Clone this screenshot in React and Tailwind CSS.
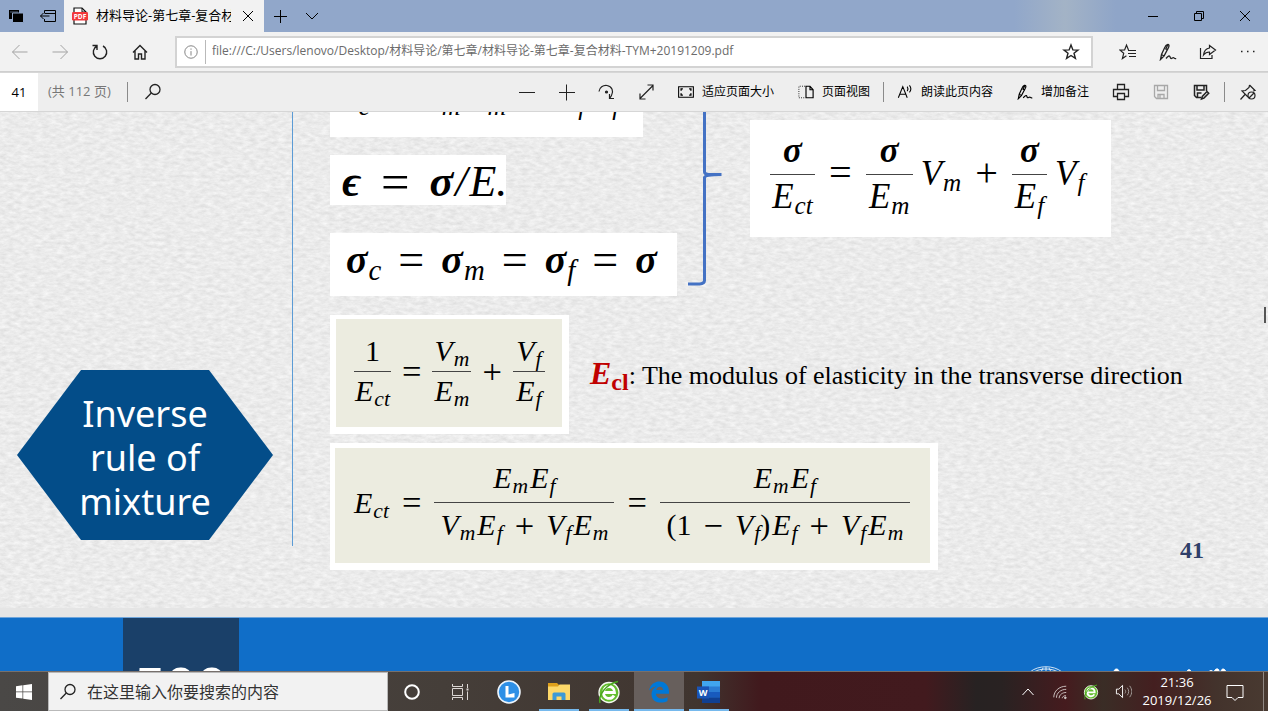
import React from "react";

const UI = "font-['Open_Sans','Noto_Sans_CJK_SC',sans-serif]";

function Icon({ size = 18, children, sw = 1, ...rest }) {
  return (
    <svg width={size} height={size} viewBox="0 0 18 18" fill="none" stroke="currentColor" strokeWidth={sw} aria-hidden="true" {...rest}>
      {children}
    </svg>
  );
}

const PenPath = () => (
  <>
    <path d="M5 13 1.500 16.500 2.500 11.500 6 4c1-2.500 4-3.600 4-1.300 0 .8-.4 1.600-.8 2.400L5 13ZM2.500 11.500 5 13M9 1.500 6.500 6.500M7 6l2 1" strokeWidth="1.300" />
    <path d="M7 15.500c2-2.500 3.500-3.200 4-1.800.4 1.200.7 2.300 2 1.500 1-.7 1.500-.9 2.200-.1.5.6 1 .8 2 .4" strokeWidth="1.300" />
  </>
);

const NavButton = ({ label, children, className = "" }) => (
  <button aria-label={label} className={`flex h-full w-10 shrink-0 items-center justify-center ${className}`}>
    {children}
  </button>
);

const ToolButton = ({ icon, text }) => (
  <button className="flex h-full shrink-0 items-center gap-2 px-3 text-xs whitespace-nowrap text-black">
    {icon}
    {text}
  </button>
);

function TitleBar() {
  return (
    <header className="flex h-8 shrink-0 bg-linear-to-r from-[#91a7ca] from-80% via-[#a3b3c6] via-84% to-[#8fa5c8] to-88% text-black">
      <div className="flex w-16 shrink-0">
        <button aria-label="已搁置的标签页" className="flex w-8 items-center justify-center">
          <svg width="16" height="16" viewBox="0 0 16 16" aria-hidden="true">
            <path d="M1 2h10v9H1z" fill="#000" />
            <path d="M4.500 5h11v9.500h-11z" fill="#000" stroke="#91a7ca" />
            <path d="M2 4h8" stroke="#91a7ca" strokeWidth=".6" />
          </svg>
        </button>
        <button aria-label="搁置标签页" className="flex w-8 items-center justify-center">
          <Icon size={18}>
            <path d="M5.500 6V3.500h11v11h-11V12M5.500 6.500h11M1.500 9h9M4.500 6 1.500 9l3 3" />
          </Icon>
        </button>
      </div>
      <div className="flex w-50 shrink-0 items-center bg-[#f2f2f2] pl-2">
        <svg width="16" height="18" viewBox="0 0 16 18" className="shrink-0" aria-hidden="true">
          <path d="M2 1h8l4 4v12H2z" fill="#fff" stroke="#111" strokeWidth="1.200" />
          <path d="M10 1v4h4" fill="none" stroke="#111" />
          <rect x="0" y="5" width="16" height="8.500" rx="1.200" fill="#f2383c" />
          <text x="8" y="11.700" fontSize="6.500" fontWeight="700" fill="#fff" textAnchor="middle" fontFamily="Open Sans">PDF</text>
        </svg>
        <span className="ml-2 w-[135px] overflow-hidden text-[13px] whitespace-nowrap">材料导论-第七章-复合材料</span>
        <button aria-label="关闭标签页" className="flex h-full grow items-center justify-center">
          <Icon size={18}><path d="m4 4 10 10M14 4 4 14" /></Icon>
        </button>
      </div>
      <button aria-label="新建标签页" className="flex w-8 items-center justify-center">
        <Icon size={18}><path d="M9.500 3v13M3 9.500h13" /></Icon>
      </button>
      <button aria-label="标签页预览" className="flex w-8 items-center justify-center">
        <Icon size={18}><path d="m3 6 6 6 6-6" /></Icon>
      </button>
      <div className="ml-auto flex">
        <button aria-label="最小化" className="flex w-[46px] items-center justify-center">
          <Icon size={18}><path d="M4 9.500h10" /></Icon>
        </button>
        <button aria-label="还原" className="flex w-[46px] items-center justify-center">
          <Icon size={18}><path d="M4.500 6.500h7v7h-7zM6.500 6.500v-2h7v7h-2" /></Icon>
        </button>
        <button aria-label="关闭" className="flex w-[46px] items-center justify-center">
          <Icon size={18}><path d="m4 4 10 10M14 4 4 14" /></Icon>
        </button>
      </div>
    </header>
  );
}

function NavBar() {
  return (
    <nav className="flex h-10 shrink-0 items-center border-b border-[#cfcfcf] bg-[#f2f2f2] text-[#222]">
      <NavButton label="后退" className="text-[#a3a3a3]">
        <Icon size={18}><path d="M1.500 9h15M8.500 2l-7 7 7 7" /></Icon>
      </NavButton>
      <NavButton label="前进" className="text-[#a3a3a3]">
        <Icon size={18}><path d="M1.500 9h15M9.500 2l7 7-7 7" /></Icon>
      </NavButton>
      <NavButton label="刷新">
        <Icon size={18} sw={1.4}><path d="M12 3a6.700 6.700 0 1 1-6 0M1.500 2.500H6V7" /></Icon>
      </NavButton>
      <NavButton label="主页">
        <Icon size={18} sw={1.4}><path d="m2 9.500 7-7 7 7M4 8v8h3.500v-5h3v5H14V8" /></Icon>
      </NavButton>
      <div className="mr-[15px] ml-[15px] flex h-8 grow items-center border-2 border-[#d3d3d3] bg-white">
        <button aria-label="网站信息" className="flex h-full w-7 items-center justify-center text-[#777]">
          <Icon size={16}><circle cx="9" cy="9" r="7" /><path d="M9 8v5M9 5v1.500" /></Icon>
        </button>
        <span className="h-6 w-px bg-[#b9b9b9]" />
        <input aria-label="地址" readOnly value="file:///C:/Users/lenovo/Desktop/材料导论/第七章/材料导论-第七章-复合材料-TYM+20191209.pdf" className="ml-1.5 h-full min-w-0 grow bg-transparent pb-1 text-xs text-[#6b6b6b] outline-none" />
        <NavButton label="收藏">
          <Icon size={18} sw={1.4}><path d="m9 2 1.900 4.900 5.100.2-4 3.200 1.400 5.100L9 12.500l-4.400 2.900L6 10.300 2 7.100l5.100-.2z" /></Icon>
        </NavButton>
      </div>
      <NavButton label="收藏夹">
        <Icon size={18} sw={1.200}><path d="M9.500 6.900 7.500 2 5.600 6.900l-4.600.2 3.700 3.200-1.300 5.200 4-2.800M9 7.500h8M9 10.500h8M10 13.500h7" /></Icon>
      </NavButton>
      <NavButton label="添加笔记"><Icon size={18}><PenPath /></Icon></NavButton>
      <NavButton label="共享">
        <Icon size={18} sw={1.200}><path d="M1.500 5v10.500H13V12M10.500 2.500l6 4.500-6 4.500V9C7.500 9 6 10 4.500 12 5 8 7 5.500 10.500 5z" /></Icon>
      </NavButton>
      <NavButton label="更多">
        <Icon size={18}><path d="M2 8.500h1.500M8 8.500h1.500M14 8.500h1.500" strokeWidth="1.500" /></Icon>
      </NavButton>
    </nav>
  );
}

function PdfToolbar() {
  return (
    <div className="flex h-10 shrink-0 items-center border-y border-[#d6d6d6] bg-[#eeeeee] text-[#222]">
      <input aria-label="页码" defaultValue="41" className="h-full w-[38px] bg-white text-center text-[13px] text-black outline-none" />
      <span className="ml-[10px] text-[13px] text-[#777]">(共 112 页)</span>
      <span className="ml-4 h-5 w-px bg-[#8a8a8a]" />
      <button aria-label="查找" className="ml-4 flex h-full items-center">
        <Icon size={18} sw={1.300}><circle cx="11" cy="6.500" r="5" /><path d="M7.300 10 1.500 16" /></Icon>
      </button>
      <div className="ml-auto flex h-full items-center">
        <NavButton label="缩小"><Icon><path d="M2 9.500h16" /></Icon></NavButton>
        <NavButton label="放大"><Icon><path d="M2 9.500h16M9.500 1.500v16" /></Icon></NavButton>
        <NavButton label="旋转"><Icon sw={1.200}><path d="M2 8.500c.5-4 4-6.500 8-6 5 .800 7 6 4.500 10L13 15M12.500 11v4.500H17" /><circle cx="9.500" cy="9" r="1" fill="currentColor" /></Icon></NavButton>
        <NavButton label="全屏"><Icon sw={1.200}><path d="m3 15.500 13-13M10.500 2h5.500v5.500M8.500 16H3v-5.500" /></Icon></NavButton>
        <ToolButton text="适应页面大小" icon={<Icon size={16}><path d="M.700 3h16.600v12H.700z" strokeWidth="1.200" /><path d="M3.500 7.500v-2h2M12.500 5.500h2v2M14.500 10.500v2h-2M5.500 12.500h-2v-2" strokeWidth="1.500" /></Icon>} />
        <ToolButton text="页面视图" icon={<Icon size={16}><path d="M8 2.500H1v13h7" strokeDasharray="1 1.500" /><path d="M9 2.500h4.500l3.500 4v9H9zM13.500 2.500v4H17" strokeWidth="1.300" /></Icon>} />
        <span className="mx-px h-5 w-px bg-[#8a8a8a]" />
        <ToolButton text="朗读此页内容" icon={<Icon size={16} sw={1.200}><path d="M1.500 15.500 6.500 3l5 12.500M3.200 11.500h6.600M11.500 3c1 1.500 1 3.500 0 5M14 1.500c2 2.500 2 5.500 0 8" /></Icon>} />
        <ToolButton text="增加备注" icon={<Icon size={16}><PenPath /></Icon>} />
        <NavButton label="打印"><Icon sw={1.300}><path d="M5.500 6.500v-5h7v5M5.500 13.500H1.500v-7h15v7h-4M5.500 10.500h7v6h-7z" /></Icon></NavButton>
        <NavButton label="保存" className="text-[#a8a8a8]"><Icon sw={1.300}><path d="M2.500 2.500h13v13h-11l-2-2zM5.500 2.500v5h7v-5M6 15.500v-4h6v4M8 12v3" /></Icon></NavButton>
        <NavButton label="另存为"><Icon sw={1.500}><path d="M9 14.500H4.500l-2-2v-10h12V8M5 2.500v4.500h7V2.500M5.500 14v-4h4" /><path d="m9.500 16 .800-2.500L15 8.500l1.700 1.700-4.800 4.900z" /></Icon></NavButton>
        <span className="mx-[3px] h-5 w-px bg-[#8a8a8a]" />
        <NavButton label="取消固定工具栏"><Icon sw={1.200}><path d="m10.500 2 5.500 5.500-2 .5M10.500 2l-.5 2.500-3.500 3-3.500.5 6 6M1.500 16.500l4.500-5" /><circle cx="12.500" cy="12.500" r="3.500" /><path d="m10 15 5-5" /></Icon></NavButton>
      </div>
    </div>
  );
}

const Sym = ({ v, s, bold }) => (
  <span className={`italic whitespace-nowrap ${bold ? "font-bold" : ""}`}>
    {v}
    {s && <sub className="ml-px text-[0.72em] font-normal">{s}</sub>}
  </span>
);
const Op = ({ children }) => <span className="text-[1.15em] leading-none">{children}</span>;

const Frac = ({ num, den, className = "" }) => (
  <span className={`flex flex-col items-center ${className}`}>
    <span className="flex w-full justify-center border-b border-[#444] pb-[5px]">{num}</span>
    <span className="flex justify-center pt-1 whitespace-nowrap">{den}</span>
  </span>
);

function Paper() {
  return (
    <svg className="absolute inset-0 size-full" aria-hidden="true">
      <filter id="grain" x="0" y="0" width="100%" height="100%" colorInterpolationFilters="sRGB">
        <feTurbulence type="fractalNoise" baseFrequency="0.14 0.3" numOctaves="4" seed="7" />
        <feColorMatrix values="0.13 0 0 0 0.856  0.13 0 0 0 0.856  0.13 0 0 0 0.856  0 0 0 0 1" />
      </filter>
      <rect width="100%" height="100%" filter="url(#grain)" />
    </svg>
  );
}

function Slide() {
  return (
    <article className="relative flex shrink-0 items-start bg-[#ebebeb] pb-[38px] font-['Liberation_Serif',serif] text-black">
      <Paper />
      <aside className="relative h-[434px] w-[293px] shrink-0 border-r border-[#5b9bd5] pt-[258px] pl-[17px]">
        <h2 className="flex h-[170px] w-64 items-center justify-center bg-[#034d89] pt-1.5 text-center font-['Noto_Sans',sans-serif] text-4xl leading-11 text-white [clip-path:polygon(25%_0,75%_0,100%_50%,75%_100%,25%_100%,0_50%)]">
          Inverse<br />rule of<br />mixture
        </h2>
      </aside>
      <div className="relative ml-[37px] flex grow flex-col">
        <section className="flex items-start">
          <div className="flex w-[347px] flex-col items-start">
            <div className="flex h-[25px] w-[313px] items-end gap-4 overflow-hidden bg-white pb-[22px] pl-3 text-[36px] leading-9">
              <Sym bold v="ϵ" s="c" /><Op>=</Op>
              <span className="flex gap-1"><Sym bold v="ϵ" s="m" /><Sym v="V" s="m" /></span>
              <Op>+</Op>
              <span className="flex gap-1"><Sym bold v="ϵ" s="f" /><Sym v="V" s="f" /></span>
            </div>
            <div className="mt-[18px] flex h-[50px] w-44 items-center gap-5 overflow-hidden bg-white pt-1 pl-3 text-[44px] leading-none">
              <Sym bold v="ϵ" /><Op>=</Op>
              <span className="flex gap-0.5"><Sym bold v="σ" /><Sym v="/" /><Sym v="E." /></span>
            </div>
            <div className="mt-7 flex h-[63px] w-full items-center gap-[17px] bg-white pb-2.5 pl-4 text-[40px] leading-none">
              <Sym bold v="σ" s="c" /><Op>=</Op><Sym bold v="σ" s="m" /><Op>=</Op><Sym bold v="σ" s="f" /><Op>=</Op><Sym bold v="σ" />
            </div>
          </div>
          <svg width="36" height="176" viewBox="0 0 36 176" className="ml-[10px] shrink-0" fill="none" stroke="#4472c4" strokeWidth="3" aria-hidden="true">
            <path d="M17.500 0v60q0 2 4 2.500h13q-17 0-17 3v103q0 3-5 3.500H1" />
          </svg>
          <div className="mt-2 ml-[27px] flex h-[117px] w-[361px] shrink-0 items-center gap-3.5 bg-white pb-2.5 pl-5 text-[35px] leading-9">
            <Frac className="w-[45px]" num={<Sym bold v="σ" />} den={<Sym v="E" s="ct" />} />
            <Op>=</Op>
            <span className="flex items-center gap-2"><Frac className="w-[47px]" num={<Sym bold v="σ" />} den={<Sym v="E" s="m" />} /><Sym v="V" s="m" /></span>
            <Op>+</Op>
            <span className="flex items-center gap-2"><Frac className="w-[35px]" num={<Sym bold v="σ" />} den={<Sym v="E" s="f" />} /><Sym v="V" s="f" /></span>
          </div>
        </section>
        <section className="mt-[19px] flex items-center">
          <div className="h-[119px] w-[239px] shrink-0 bg-white pt-1 pr-[7px] pb-[7px] pl-1.5">
            <div className="flex h-full items-center gap-[11px] bg-[#ecece0] pb-1 pl-[18px] text-[30px] leading-[30px]">
              <Frac className="w-[37px]" num="1" den={<Sym v="E" s="ct" />} />
              <Op>=</Op>
              <Frac className="w-[39px]" num={<Sym v="V" s="m" />} den={<Sym v="E" s="m" />} />
              <Op>+</Op>
              <Frac className="w-8" num={<Sym v="V" s="f" />} den={<Sym v="E" s="f" />} />
            </div>
          </div>
          <p className="ml-[21px] text-[26px] leading-9 whitespace-nowrap">
            <b className="text-[#c00000]"><i className="text-[32px]">E</i><sub className="text-[24px]">cl</sub></b>: The modulus of elasticity in the transverse direction
          </p>
        </section>
        <section className="mt-[9px] flex items-end justify-between pr-16">
          <div className="h-[127px] w-[608px] shrink-0 bg-white pt-[5px] pr-2 pb-[7px] pl-[5px]">
            <div className="flex h-full items-center gap-[13px] bg-[#ecece0] pb-1.5 pl-[19px] text-[30px] leading-[30px]">
              <Sym v="E" s="ct" />
              <Op>=</Op>
              <Frac className="w-[180px]" num={<span className="flex gap-0.5 pb-1"><Sym v="E" s="m" /><Sym v="E" s="f" /></span>} den={<span className="flex items-center gap-3 pt-px"><span className="flex gap-0.5"><Sym v="V" s="m" /><Sym v="E" s="f" /></span><Op>+</Op><span className="flex gap-0.5"><Sym v="V" s="f" /><Sym v="E" s="m" /></span></span>} />
              <Op>=</Op>
              <Frac className="w-[250px]" num={<span className="flex gap-0.5 pb-1"><Sym v="E" s="m" /><Sym v="E" s="f" /></span>} den={<span className="flex items-center gap-3 pt-px"><span>(1</span><Op>−</Op><span className="flex gap-0.5"><span><Sym v="V" s="f" />)</span><Sym v="E" s="f" /></span><Op>+</Op><span className="flex gap-0.5"><Sym v="V" s="f" /><Sym v="E" s="m" /></span></span>} />
            </div>
          </div>
          <span className="text-2xl leading-10 font-bold text-[#2f3f69]">41</span>
        </section>
      </div>
      <span className="absolute top-[195px] right-0.5 h-4 w-0.5 bg-[#555]" />
    </article>
  );
}

function NextSlide() {
  return (
    <article className="mt-[9px] flex grow items-start justify-between overflow-hidden border-t border-[#6fa5da] bg-[#106ec8] pr-[38px] pl-[123px]">
      <div className="h-24 w-29 bg-[#1a4069] pt-10 text-center font-['Open_Sans',sans-serif] text-[54px] leading-[56px] font-bold text-white">500</div>
      <svg width="200" height="54" viewBox="0 0 200 54" className="shrink-0" fill="none" stroke="#fff" aria-hidden="true">
        <path d="M0 54c8-7 24-7 32 0M4 54c6-4 18-4 24 0M11 54l2-4M21 54l-2-4M16 49v5" strokeWidth="1" opacity=".8" />
        <path d="M84 54c0-4 5-4 5 0M157 54c0-3 4-3 4 0M179 54c0-2 4-2 4 0M184 54c1-4 5-4 5-1M191 54c0-4 4-4 5 0" fill="#fff" />
      </svg>
    </article>
  );
}

const TaskButton = ({ label, open, active, children }) => (
  <button aria-label={label} className={`flex h-full w-[50px] shrink-0 flex-col items-center ${active ? "bg-[#675f5c]" : ""}`}>
    <span className="flex grow items-center pt-0.5">{children}</span>
    <span className={`h-0.5 ${active ? "w-full" : "w-10"} ${open ? "bg-[#76b9ed]" : ""}`} />
  </button>
);

function GreenE({ size }) {
  return (
    <svg width={size} height={size} viewBox="0 0 24 24" fill="none" aria-hidden="true">
      <circle cx="12" cy="12.500" r="10" fill="#64bd2f" stroke="#f4f8ef" strokeWidth="1.300" />
      <path d="M7 12.500h10.500c0-8-11-8-11 0 0 7 8 7.500 10.500 3" stroke="#fff" strokeWidth="2.800" />
      <path d="M3 23C1 15 9 4 21 1.500" stroke="#48a51f" strokeWidth="1.500" />
    </svg>
  );
}

function Taskbar() {
  return (
    <footer className="flex h-10 shrink-0 items-center border-t border-[#77706c] text-white [background-image:linear-gradient(to_right,#4a4846_0%,#453e39_35%,#40352f_55%,#41191d_60%,#421a1e_73%,#272222_77%,#292222_79%,#451b1e_84%,#3a2d26_87%,#441f20_91%,#43332c_96%,#493a31_100%)]">
      <button aria-label="开始" className="flex h-full w-12 shrink-0 items-center justify-center">
        <svg width="16" height="16" viewBox="0 0 16 16" fill="#fff" aria-hidden="true">
          <path d="M0 2.200 6.500 1.300v6.300H0zM7.200 1.200 16 0v7.600H7.200zM0 8.300h6.500v6.300L0 13.700zM7.200 8.300H16V16l-8.800-1.300z" />
        </svg>
      </button>
      <label className="flex h-full w-[340px] shrink-0 items-center border border-[#b9b9b9] bg-[#f2f2f2] pl-2.5 text-[#222]">
        <Icon size={18} sw={1.300}><circle cx="11" cy="6.500" r="5" /><path d="M7.300 10 1.500 16" /></Icon>
        <input aria-label="搜索" placeholder="在这里输入你要搜索的内容" className="ml-2.5 min-w-0 grow bg-transparent text-base outline-none placeholder:text-[#333]" />
      </label>
      <button aria-label="Cortana" className="flex h-full w-12 shrink-0 items-center justify-center">
        <svg width="18" height="18" viewBox="0 0 18 18" fill="none" stroke="#fff" strokeWidth="2" aria-hidden="true"><circle cx="9" cy="9" r="6.800" /></svg>
      </button>
      <button aria-label="任务视图" className="flex h-full w-12 shrink-0 items-center justify-center text-[#ddd8d5]">
        <Icon size={18}><path d="M1.500 1v2.500h10V1M1.500 5.500h10v7h-10zM1.500 17v-2.500h10V17M16.500 1v4M16.500 8.500v8.500" /><path d="M15.500 6.500h2" strokeWidth="2" /></Icon>
      </button>
      <TaskButton label="联想">
        <svg width="24" height="24" viewBox="0 0 24 24" aria-hidden="true"><circle cx="12" cy="12" r="11" fill="#2d8fe6" stroke="#eef5fc" strokeWidth="1.600" /><path d="M8.500 6h3v8.500l6-1.500v4.500h-9z" fill="#fff" /></svg>
      </TaskButton>
      <TaskButton label="文件资源管理器" open>
        <svg width="22" height="20" viewBox="0 0 22 20" aria-hidden="true"><path d="M0 1h9l2 2h11v15H0z" fill="#dea01c" /><path d="M0 4.500h10l1.500-2H22V18H0z" fill="#fdd869" /><path d="M4.500 18v-6q0-1.500 1.500-1.500h10q1.500 0 1.500 1.500v6h-4v-3.500h-5V18z" fill="#3d9ad6" /></svg>
      </TaskButton>
      <TaskButton label="浏览器" open><GreenE size={24} /></TaskButton>
      <TaskButton label="Microsoft Edge" open active>
        <svg width="22" height="22" viewBox="0 0 22 22" aria-hidden="true"><path d="M1 9.500C2.500 3 7 .5 11.500.5 17.500.5 21 5 21 10.500v2.300H8c.2 5.500 7.500 6 11.500 3.500V20c-6 3.200-16 2-16-6.800 0-3.500 2-6.200 5-7.700-3 .1-5.700 1.600-7.500 4Zm7.200-.4h6.900c0-4.500-6-4.500-6.900 0Z" fill="#0078d7" /></svg>
      </TaskButton>
      <TaskButton label="Word" open>
        <svg width="24" height="22" viewBox="0 0 24 22" aria-hidden="true"><path d="M5 0h18v22H5z" fill="#2b7cd3" /><path d="M5 0h18v5.500H5z" fill="#41a5ee" /><path d="M5 11h18v5.500H5z" fill="#185abd" /><path d="M5 16.500h18V22H5z" fill="#103f91" /><path d="M0 5.500h12v12H0z" fill="#1a54b5" /><text x="6" y="14.500" fontSize="9" fontWeight="700" fill="#fff" textAnchor="middle" fontFamily="Open Sans">W</text></svg>
      </TaskButton>
      <div className="ml-auto flex h-full items-center">
        <button aria-label="显示隐藏的图标" className="flex h-full w-8 items-center justify-center"><Icon size={18}><path d="m3.500 12 5.500-6 5.500 6" /></Icon></button>
        <button aria-label="网络" className="flex h-full w-8 items-center justify-center text-[#d6cfcc]">
          <Icon size={16}><path d="M2 15C2 8 8 2.500 16 2.500M5 15.500C5 10 10 6 16 6M8 16c0-4 4-6.500 8-6.500M11.500 16c0-1.500 2-3 4-3" /><circle cx="15" cy="15.500" r="1" fill="currentColor" /></Icon>
        </button>
        <button aria-label="安全浏览" className="flex h-full w-[30px] items-center justify-center"><GreenE size={16} /></button>
        <button aria-label="音量" className="flex h-full w-[34px] items-center justify-center">
          <Icon size={17}><path d="M1.500 6.500H4l4-4v13l-4-4H1.500z" /><path d="M10.500 7c1 1.300 1 2.700 0 4M13 5c2 2.500 2 5.500 0 8M15.500 3c3 4 3 8 0 12" stroke="#a79f9c" /></Icon>
        </button>
        <time className="w-[74px] pb-0.5 text-center text-[13px] leading-[18px]">21:36<br />2019/12/26</time>
        <button aria-label="通知" className="mr-[7px] flex h-full w-[42px] items-center justify-center">
          <Icon size={18}><path d="M1 2.500h16v12h-5l-3 3-3-3H1z" /></Icon>
        </button>
        <button aria-label="显示桌面" className="h-full w-[5px] border-l border-[#8f8782]" />
      </div>
    </footer>
  );
}

export default function App() {
  return (
    <div className={`flex h-screen flex-col overflow-hidden ${UI}`}>
      <TitleBar />
      <NavBar />
      <PdfToolbar />
      <main className="flex min-h-0 grow flex-col overflow-hidden bg-[#e5e5e5]">
        <Slide />
        <NextSlide />
      </main>
      <Taskbar />
    </div>
  );
}
